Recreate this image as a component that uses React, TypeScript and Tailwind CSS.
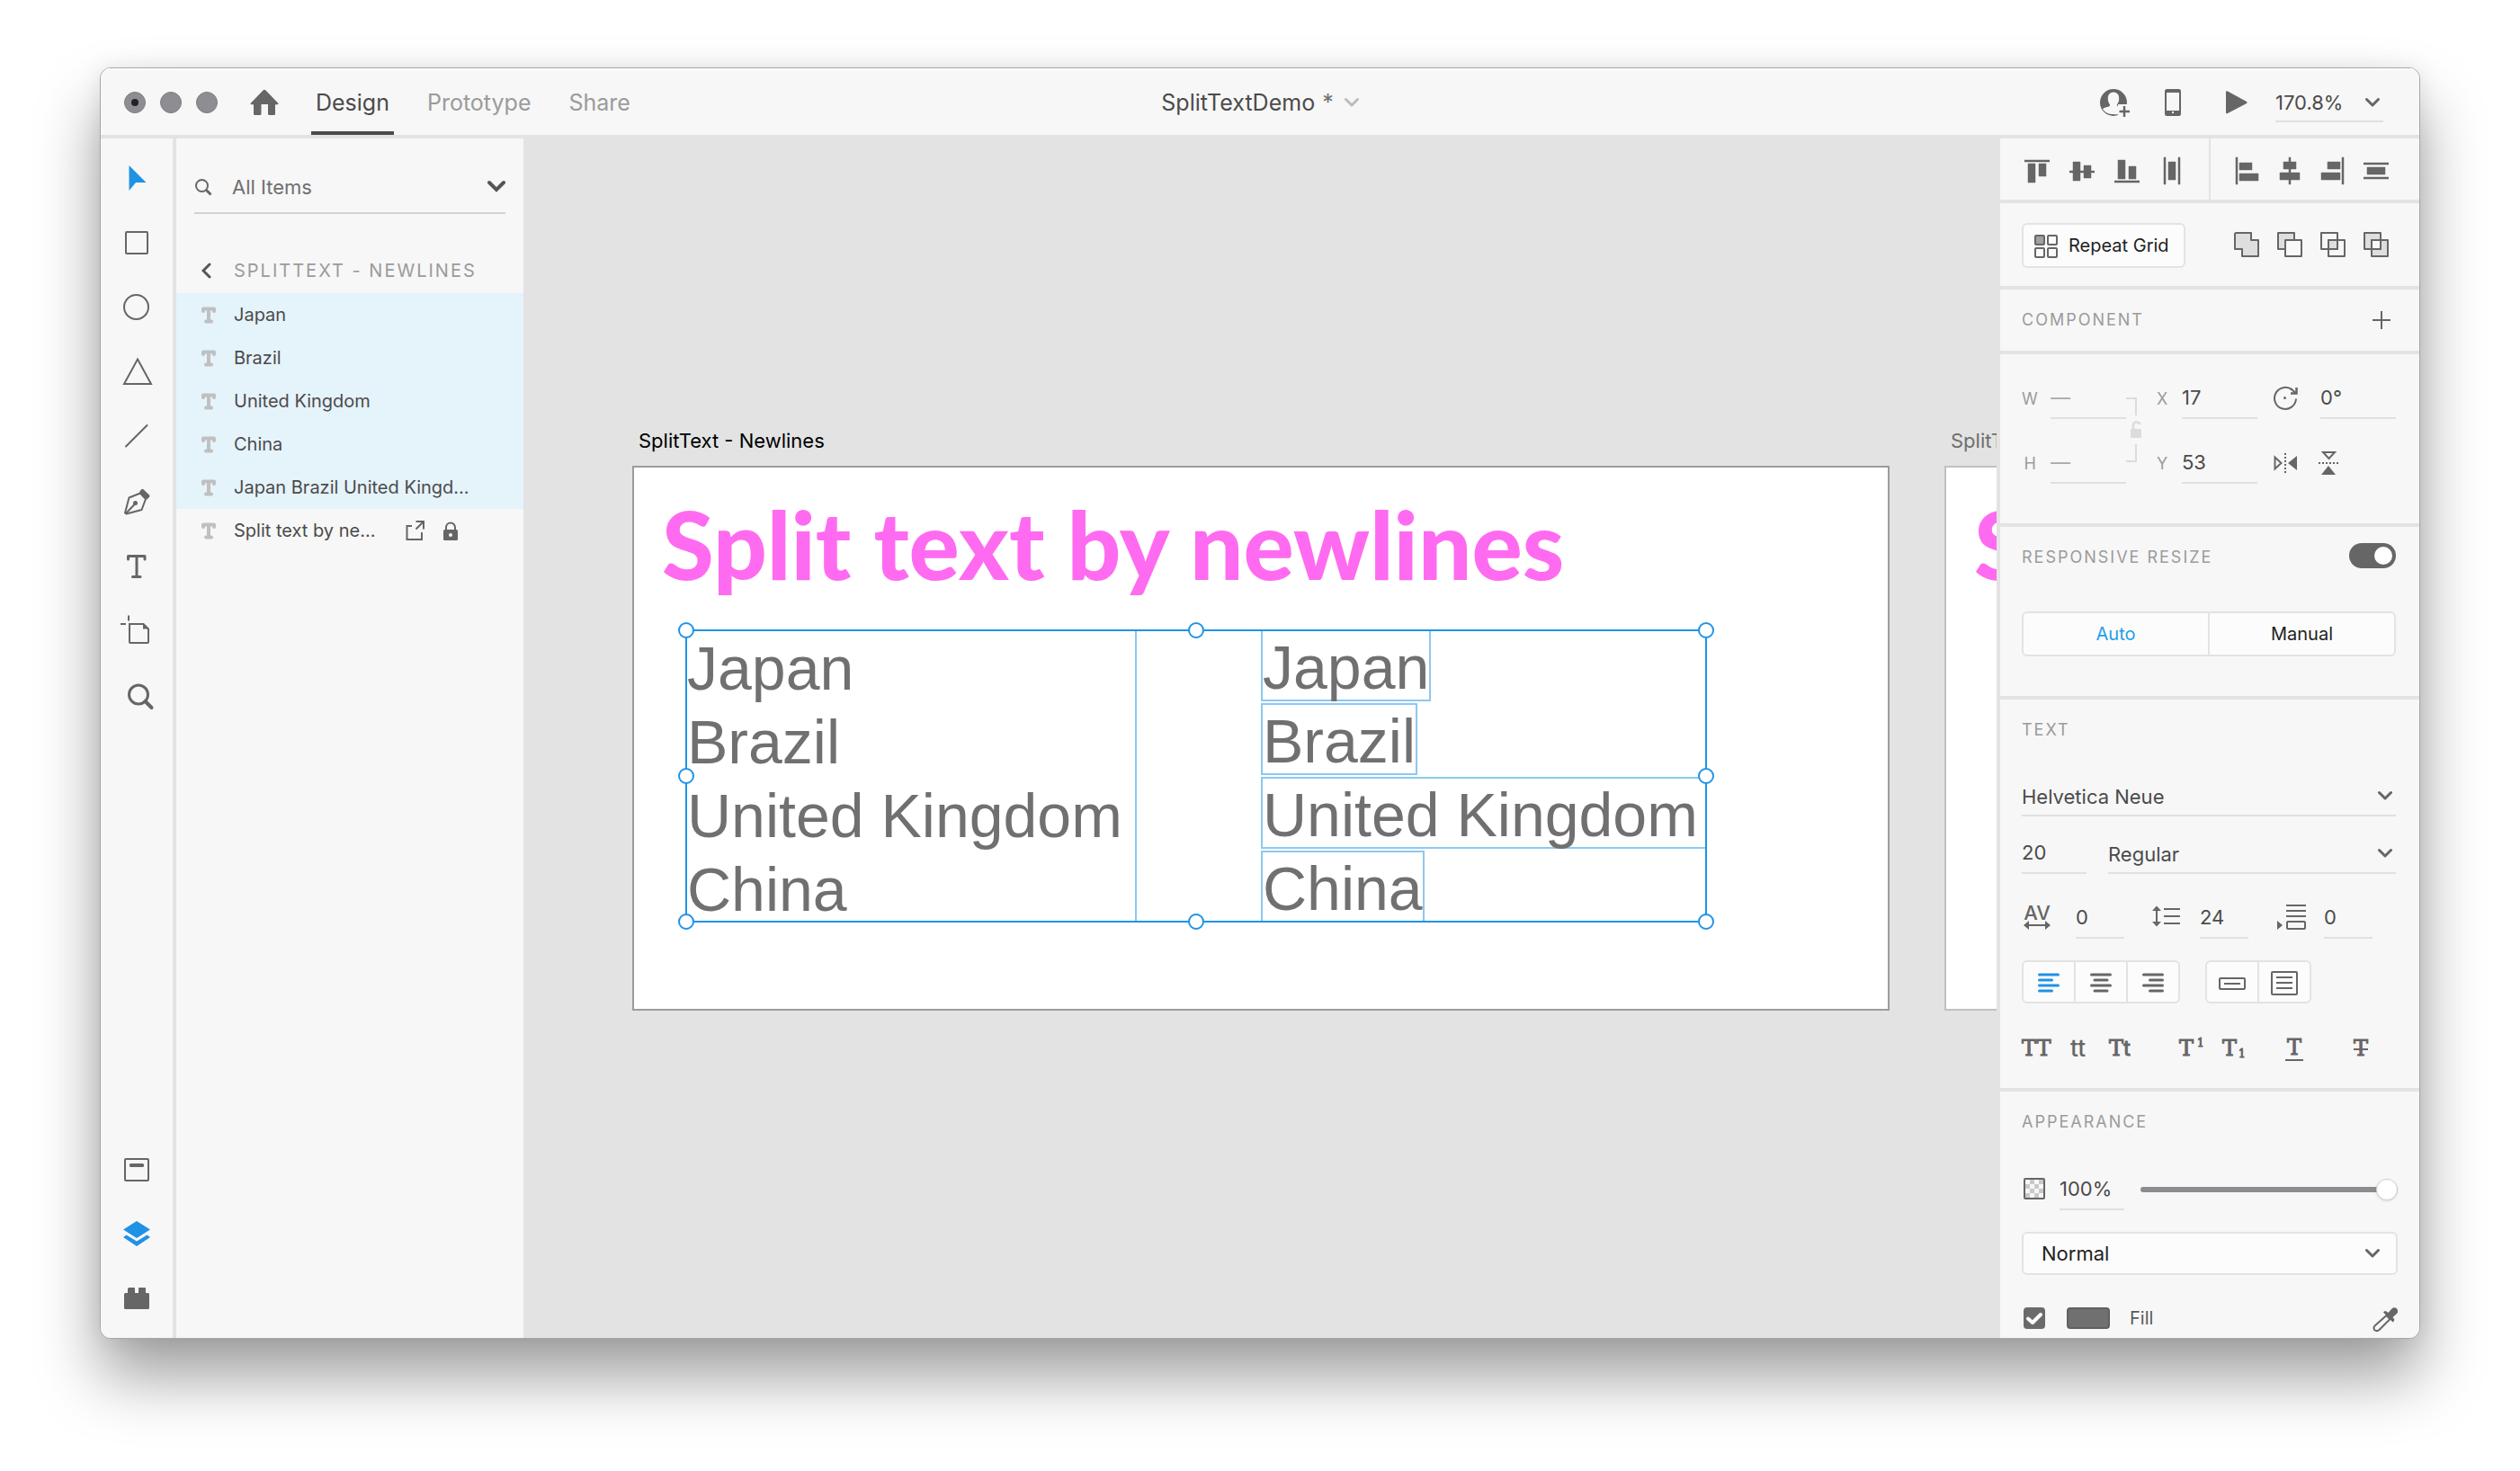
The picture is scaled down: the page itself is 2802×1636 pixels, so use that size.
import { useState, type ReactNode } from "react";

const INK = "#666666";

type IconProps = { w: number; h: number; children: ReactNode; className?: string };

function Icon({ w, h, children, className }: IconProps) {
  return (
    <svg
      width={w}
      height={h}
      viewBox={`0 0 ${w} ${h}`}
      fill="none"
      stroke="none"
      aria-hidden="true"
      className={className ?? "block shrink-0"}
    >
      {children}
    </svg>
  );
}

function Chevron({ color = INK, className }: { color?: string; className?: string }) {
  return (
    <Icon w={16} h={12} className={className}>
      <path d="M1.500 2.500 8 9l6.500-6.500" stroke={color} strokeWidth="3" strokeLinecap="round" strokeLinejoin="round" />
    </Icon>
  );
}

/* ---------- Header ---------- */

function Header() {
  const [mode, setMode] = useState("Design");
  return (
    <header className="grid h-[78px] shrink-0 grid-cols-[1fr_auto_1fr] border-b-4 border-[#e3e3e3] bg-[#f7f7f7] pt-[2px] shadow-[inset_0_2px_0_#ffffff]">
      <div className="flex items-center pl-[26px]">
        <div className="flex gap-4">
          {["Close", "Minimize", "Zoom"].map((name) => (
            <button
              key={name}
              aria-label={name}
              className="flex size-6 items-center justify-center rounded-full border border-[#7f7e83] bg-[#8e8d92]"
            >
              {name === "Close" && <span className="size-2 rounded-full bg-[#232325]" />}
            </button>
          ))}
        </div>
        <button aria-label="Home" className="ml-9">
          <Icon w={32} h={30}>
            <path
              d="M14.500 1.600a2 2 0 0 1 3 0L31 15.500q1.200 1.500-.8 1.700H28V27.500q0 1.500-1.500 1.500H21.500q-1.500 0-1.500-1.500V17H12.500V27.500q0 1.500-1.500 1.500H5.500Q4 29 4 27.500V17.200H1.800Q-.2 17 1 15.500Z"
              fill={INK}
            />
          </Icon>
        </button>
        <nav className="ml-9 flex h-full gap-8">
          {["Design", "Prototype", "Share"].map((name) => (
            <button
              key={name}
              onClick={() => setMode(name)}
              className={
                mode === name
                  ? "border-y-4 border-b-[#4b4b4b] border-t-transparent px-[5px] text-[25px] leading-8 text-[#4b4b4b]"
                  : "border-y-4 border-transparent px-[5px] text-[25px] leading-8 text-[#9b9b9b]"
              }
            >
              {name}
            </button>
          ))}
        </nav>
      </div>
      <button className="flex items-center text-[25px] leading-8 text-[#4b4b4b]">
        SplitTextDemo<span className="ml-2 text-[#707070]">*</span>
        <Chevron color="#bcbcbc" className="ml-3 block" />
      </button>
      <div className="flex items-center justify-end pr-10">
        <button aria-label="Invite" className="mr-[38px]">
          <Icon w={34} h={32}>
            <circle cx="15" cy="16" r="15" fill={INK} />
            <path
              d="M15 4.500c4 0 6.200 3 6.200 7 0 3.200-1 5.200-2.400 7 0 1.800 1.200 2.200 3.200 2.700 3 .8 4.500 2 5.500 4.300A14 14 0 0 1 15 29 14 14 0 0 1 3 23.500c1-1.300 2.300-1.800 4.800-2.400 2-.5 3.300-1 3.300-2.700-1.400-1.700-2.300-3.800-2.300-6.900 0-4 2.200-7 6.200-7Z"
              fill="#f7f7f7"
            />
            <rect x="20" y="18" width="14" height="14" fill="#f7f7f7" />
            <path d="M27 20v12M21.500 26H33" stroke={INK} strokeWidth="2.500" />
          </Icon>
        </button>
        <button aria-label="Device preview" className="mr-[49px]">
          <Icon w={18} h={32}>
            <rect x="1" y="2" width="16" height="28" rx="1.500" stroke={INK} strokeWidth="2" />
            <path d="M1 2h16v3H1ZM1 25h16v5H1Z" fill={INK} />
            <rect x="8" y="26" width="2" height="2" fill="#f7f7f7" />
          </Icon>
        </button>
        <button aria-label="Play" className="mr-[30px]">
          <Icon w={26} h={28}>
            <path d="M1 2.500Q1 .5 3 1.500L24 13q1.500 1 0 2L3 26Q1 27 1 25Z" fill={INK} />
          </Icon>
        </button>
        <div className="relative mt-2 w-[120px]">
          <select
            aria-label="Zoom level"
            className="block w-full appearance-none border-b-2 border-[#e0e0e0] bg-transparent pb-[6px] text-[22px] leading-7 text-[#4b4b4b]"
          >
            <option>170.8%</option>
          </select>
          <Chevron className="pointer-events-none absolute right-1 top-2" />
        </div>
      </div>
    </header>
  );
}

/* ---------- Toolbar ---------- */

const tools: { name: string; art: ReactNode }[] = [
  { name: "Select", art: <path d="M15.500 10 34.500 29H23l-7.500 9Z" fill="#2092e4" /> },
  { name: "Rectangle", art: <rect x="12" y="12" width="24" height="24" rx="1" stroke={INK} strokeWidth="2" /> },
  { name: "Ellipse", art: <circle cx="23.500" cy="23.500" r="13.500" stroke={INK} strokeWidth="2" /> },
  { name: "Polygon", art: <path d="M25 9.500 40 37H10Z" stroke={INK} strokeWidth="2" /> },
  { name: "Line", art: <path d="M12 34.500 35.500 11" stroke={INK} strokeWidth="2" strokeLinecap="round" /> },
  {
    name: "Pen",
    art: (
      <>
        <path d="m28 14.500-12.500 5L11 36.500l1.500 1 17-4.500 4.500-12Z" stroke={INK} strokeWidth="2" strokeLinejoin="round" />
        <path d="M12 37 22 26.500" stroke={INK} strokeWidth="2" />
        <circle cx="22.500" cy="25.500" r="2.500" fill={INK} />
        <path d="m27 13 2.500-3q1-.5 2 .3l6.500 6.200q.8 1 .2 2L35.500 21.500Z" fill={INK} />
      </>
    ),
  },
  {
    name: "Text",
    art: (
      <path
        d="M14.500 16V12.500h18.500V16M24 12.500v23M19.500 35.500h8.500"
        stroke={INK}
        strokeWidth="3"
        strokeLinecap="round"
        strokeLinejoin="round"
      />
    ),
  },
  {
    name: "Artboard",
    art: (
      <>
        <path d="M6 16h6M15 6.500v6" stroke={INK} strokeWidth="2" />
        <path d="M16 16h15.500l5.500 5.500V36q0 1-1 1H17q-1 0-1-1Z" stroke={INK} strokeWidth="2" />
        <path d="M31 16v5.500h6.500Z" fill={INK} />
      </>
    ),
  },
  {
    name: "Zoom",
    art: (
      <>
        <circle cx="26" cy="22.500" r="10.500" stroke={INK} strokeWidth="3" />
        <path d="m33.500 30 7 7" stroke={INK} strokeWidth="4" strokeLinecap="round" />
      </>
    ),
  },
];

const panels: { name: string; art: ReactNode }[] = [
  {
    name: "Libraries",
    art: (
      <>
        <rect x="11" y="13" width="26" height="24" rx="1" stroke={INK} strokeWidth="2" />
        <rect x="16" y="18" width="16" height="4" rx="1.500" fill={INK} />
      </>
    ),
  },
  {
    name: "Layers",
    art: (
      <path
        d="M24 10 39 19.500 24 29 9 19.500ZM12.500 25.500 24 32.500 35.500 25.500 39 28 24 38 9 28Z"
        fill="#2092e4"
      />
    ),
  },
  {
    name: "Plugins",
    art: (
      <path
        d="M15.500 12h5.500q1 0 1 1v5h4v-5q0-1 1-1h6q1 0 1 1v5h2.500Q38 18 38 19.500v15Q38 36 36.500 36h-25Q10 36 10 34.500v-15Q10 18 11.500 18H14v-4.500Q14 12 15.500 12Z"
        fill={INK}
      />
    ),
  },
];

function Toolbar() {
  const render = (item: { name: string; art: ReactNode }) => (
    <button key={item.name} aria-label={item.name} className="flex h-[72px] items-center justify-center">
      <Icon w={48} h={48}>
        {item.art}
      </Icon>
    </button>
  );
  return (
    <aside className="flex w-[84px] shrink-0 flex-col justify-between border-r-4 border-[#e3e3e3] bg-[#f7f7f7] py-2">
      <div className="flex flex-col">{tools.map(render)}</div>
      <div className="flex flex-col">{panels.map(render)}</div>
    </aside>
  );
}

/* ---------- Layers panel ---------- */

const layers = [
  { name: "Japan", selected: true },
  { name: "Brazil", selected: true },
  { name: "United Kingdom", selected: true },
  { name: "China", selected: true },
  { name: "Japan Brazil United Kingd...", selected: true },
  { name: "Split text by ne...", selected: false },
];

function LayersPanel() {
  return (
    <aside className="w-[386px] shrink-0 bg-[#f7f7f7] pt-[38px]">
      <div className="mx-5 flex items-center border-b-2 border-[#d3d3d3] pb-3">
        <Icon w={20} h={20}>
          <circle cx="8.500" cy="8.500" r="6.500" stroke={INK} strokeWidth="2" />
          <path d="m13.500 13.500 5 5" stroke={INK} strokeWidth="3" />
        </Icon>
        <input
          aria-label="Search layers"
          placeholder="All Items"
          className="ml-[22px] w-0 flex-1 bg-transparent text-[22px] leading-8 text-[#707070] outline-none placeholder:text-[#707070]"
        />
        <button aria-label="Filter layers">
          <Icon w={20} h={16}>
            <path d="m2 3 8 8 8-8" stroke="#555555" strokeWidth="4" strokeLinecap="round" />
          </Icon>
        </button>
      </div>
      <div className="flex h-[88px] items-end gap-6 pb-[11px] pl-7">
        <button aria-label="Back" className="py-[5px]">
          <Icon w={12} h={18}>
            <path d="m9 2-7 7 7 7" stroke="#555555" strokeWidth="3" strokeLinecap="round" />
          </Icon>
        </button>
        <h2 className="whitespace-nowrap text-[20px] leading-7 tracking-widest text-[#9b9b9b]">SPLITTEXT - NEWLINES</h2>
      </div>
      <ul>
        {layers.map((layer) => (
          <li
            key={layer.name}
            className={layer.selected ? "flex h-12 items-center bg-[#e5f3fb] pl-7" : "flex h-12 items-center pl-7"}
          >
            <Icon w={16} h={20}>
              <path d="M2 6V3.500h12V6M8 3.500v14M5 17.500h6" stroke="#c0c0c0" strokeWidth="4" strokeLinejoin="round" strokeLinecap="round" />
            </Icon>
            <span className="ml-5 whitespace-nowrap text-[20px] leading-7 text-[#4b4b4b]">{layer.name}</span>
            {!layer.selected && (
              <span className="ml-[34px] flex gap-5">
                <button aria-label="Mark for export">
                  <Icon w={22} h={24}>
                    <path d="M7 7H1.500V22H18V14" stroke={INK} strokeWidth="2" />
                    <path d="M11.500 2H20v8.500M20 2l-8.500 8.500" stroke={INK} strokeWidth="2" />
                  </Icon>
                </button>
                <button aria-label="Unlock">
                  <Icon w={16} h={24}>
                    <path d="M3 12V8.500a5 5 0 0 1 10 0V12" stroke={INK} strokeWidth="2" />
                    <rect y="11" width="16" height="12" rx="1.500" fill={INK} />
                    <circle cx="8" cy="17" r="2" fill="#f7f7f7" />
                  </Icon>
                </button>
              </span>
            )}
          </li>
        ))}
      </ul>
    </aside>
  );
}

/* ---------- Canvas ---------- */

const countries = ["Japan", "Brazil", "United Kingdom", "China"];

const handles = [
  "-left-[10px] -top-[10px]",
  "left-1/2 -translate-x-1/2 -top-[10px]",
  "-right-[10px] -top-[10px]",
  "-left-[10px] top-1/2 -translate-y-1/2",
  "-right-[10px] top-1/2 -translate-y-1/2",
  "-left-[10px] -bottom-[10px]",
  "left-1/2 -translate-x-1/2 -bottom-[10px]",
  "-right-[10px] -bottom-[10px]",
];

const artboardTitle =
  "absolute left-[31px] top-[24px] whitespace-nowrap font-['Lato'] text-[105px] font-black leading-[120px] text-[#ff6bf0]";

function Canvas() {
  return (
    <main className="relative min-w-0 flex-1 overflow-hidden bg-[#e3e3e3]">
      <div className="absolute left-[121px] top-[322px] w-[1398px]">
        <div className="pl-[7px] text-[22px] leading-7 text-black">SplitText - Newlines</div>
        <section className="relative mt-[14px] h-[606px] border-2 border-[#9c9c9c] bg-white">
          <h1 className={artboardTitle}>Split text by newlines</h1>
          <div className="absolute left-[57px] top-[180px] h-[326px] w-[1136px] border-2 border-[#1f93e8] font-['Liberation_Sans'] text-[68px] text-[#707070]">
            <div className="absolute inset-y-0 left-0 w-[500px] border-r-2 border-[#8cc8f2] leading-[82px]">
              {countries.map((name) => (
                <div key={name}>{name}</div>
              ))}
            </div>
            <div className="absolute -right-[2px] -top-[2px] flex w-[496px] flex-col items-start gap-[2px]">
              {countries.map((name) => (
                <div
                  key={name}
                  className={`h-20 whitespace-nowrap border-2 border-[#8cc8f2] leading-[80px] ${
                    name === "United Kingdom" ? "self-stretch" : ""
                  }`}
                >
                  {name}
                </div>
              ))}
            </div>
            <div className="absolute -inset-[2px] border-2 border-[#1f93e8]" />
            {handles.map((place) => (
              <span key={place} className={`absolute size-[18px] rounded-full border-2 border-[#1f93e8] bg-white ${place}`} />
            ))}
          </div>
        </section>
      </div>
      <div className="absolute left-[1580px] right-0 top-[322px] overflow-hidden">
        <div className="whitespace-nowrap pl-[7px] text-[22px] leading-7 text-[#6e6e6e]">SplitText</div>
        <section className="relative mt-[14px] h-[606px] overflow-hidden border-2 border-r-0 border-[#c0c0c0] bg-white">
          <h1 className={artboardTitle}>S</h1>
        </section>
      </div>
    </main>
  );
}

/* ---------- Inspector ---------- */

const alignLeft: { name: string; art: ReactNode }[] = [
  { name: "Align top", art: <path d="M0 8h28v2H0ZM4 12h8v21H4ZM16 12h8v14h-8Z" /> },
  { name: "Align middle", art: <path d="M0 20h28v2H0ZM4 10h8v21H4ZM16 14h8v14h-8Z" /> },
  { name: "Align bottom", art: <path d="M0 31h28v2H0ZM4 8h8v21H4ZM16 15h8v14h-8Z" /> },
  { name: "Distribute horizontally", art: <path d="M5 5h2v30H5ZM21 5h2v30h-2ZM10 10h8v20h-8Z" /> },
];

const alignRight: { name: string; art: ReactNode }[] = [
  { name: "Align left", art: <path d="M2 5h2v30H2ZM6 11h14v8H6ZM6 23h21v8H6Z" /> },
  { name: "Align center", art: <path d="M13 5h2v30h-2ZM7 10h14v8H7ZM3 22h22v8H3Z" /> },
  { name: "Align right", art: <path d="M24 5h2v30h-2ZM8 10h14v8H8ZM1 22h21v8H1Z" /> },
  { name: "Distribute vertically", art: <path d="M0 11h28v2H0ZM0 27h28v2H0ZM4 16h20v8H4Z" /> },
];

const booleans: { name: string; art: ReactNode }[] = [
  {
    name: "Add",
    art: <path d="M2 1h17v8h8v18H9v-8H1V2Z" fill="#dedede" stroke={INK} strokeWidth="2" strokeLinejoin="round" />,
  },
  {
    name: "Subtract",
    art: (
      <g stroke={INK} strokeWidth="2" strokeLinejoin="round">
        <path d="M1 1h18v18H1Z" fill="#dedede" />
        <path d="M9 9h18v18H9Z" fill="#f9f9f9" />
      </g>
    ),
  },
  {
    name: "Intersect",
    art: (
      <g stroke={INK} strokeWidth="2" strokeLinejoin="round">
        <path d="M1 1h18v18H1ZM9 9h18v18H9Z" />
        <path d="M9 9h10v10H9Z" fill="#dedede" />
      </g>
    ),
  },
  {
    name: "Exclude overlap",
    art: (
      <g stroke={INK} strokeWidth="2" strokeLinejoin="round">
        <path d="M1 1h18v18H1ZM9 9h18v18H9Z" fill="#dedede" />
        <path d="M9 9h10v10H9Z" fill="#f9f9f9" />
      </g>
    ),
  },
];

function AlignButton({ item }: { item: { name: string; art: ReactNode } }) {
  return (
    <button aria-label={item.name}>
      <Icon w={28} h={36}>
        <g fill={INK} stroke={INK} strokeWidth="0.500" strokeLinejoin="round">
          {item.art}
        </g>
      </Icon>
    </button>
  );
}

function Field({ label, value, className }: { label: string; value: string; className: string }) {
  return (
    <input
      aria-label={label}
      defaultValue={value}
      className={`block border-b-2 border-[#e0e0e0] bg-transparent pb-2 text-[22px] leading-7 text-[#4b4b4b] outline-none ${className}`}
    />
  );
}

function LabeledField({ id, label, value, dash }: { id: string; label: string; value: string; dash?: boolean }) {
  return (
    <div className="flex items-baseline justify-between">
      <label
        htmlFor={id}
        className={dash ? "w-4 text-right text-[18px] leading-6 text-[#9b9b9b]" : "w-3 text-[18px] leading-6 text-[#9b9b9b]"}
      >
        {label}
      </label>
      <input
        id={id}
        defaultValue={value}
        className={`block h-[38px] w-[84px] border-b-2 border-[#e0e0e0] bg-transparent pb-2 text-[22px] leading-7 outline-none ${
          dash ? "text-[#a8a8a8]" : "text-[#4b4b4b]"
        }`}
      />
    </div>
  );
}

function LineSelect({ label, value }: { label: string; value: string }) {
  return (
    <div className="relative flex-1">
      <select
        aria-label={label}
        className="block w-full appearance-none border-b-2 border-[#e0e0e0] bg-transparent pb-[6px] text-[22px] leading-7 text-[#4b4b4b]"
      >
        <option>{value}</option>
      </select>
      <Chevron className="pointer-events-none absolute right-1 top-[7px]" />
    </div>
  );
}

function SectionTitle({ children }: { children: ReactNode }) {
  return <h2 className="text-[18px] leading-6 tracking-[2px] text-[#9b9b9b]">{children}</h2>;
}

const slab = "font-['DejaVu_Serif'] text-[24px] leading-7 [-webkit-text-stroke:1px_#666666]";

function Inspector() {
  return (
    <aside className="flex w-[470px] shrink-0 flex-col overflow-hidden border-l-4 border-[#e3e3e3] bg-[#f7f7f7] [&>section]:shrink-0">
      <section className="flex h-[72px] items-center border-b-4 border-[#e3e3e3]">
        <div className="flex h-full w-[234px] items-center gap-[22px] border-r-2 border-[#e3e3e3] pl-[27px]">
          {alignLeft.map((item) => (
            <AlignButton key={item.name} item={item} />
          ))}
        </div>
        <div className="flex items-center gap-5 pl-[26px]">
          {alignRight.map((item) => (
            <AlignButton key={item.name} item={item} />
          ))}
        </div>
      </section>

      <section className="flex h-24 items-center justify-between border-b-4 border-[#e3e3e3] pl-6 pr-[34px]">
        <button className="mt-[2px] flex h-[50px] w-[182px] items-center gap-3 rounded-md border-2 border-[#e3e3e3] bg-[#fcfcfc] pl-3 text-[20px] text-[#222222]">
          <Icon w={26} h={28} className="mt-1 block shrink-0">
            <g stroke={INK} strokeWidth="2">
              <rect x="1" y="1" width="10" height="10" rx="1" fill="#a0a0a0" />
              <rect x="15" y="1" width="10" height="10" rx="1" />
              <rect x="1" y="15" width="10" height="10" rx="1" />
              <rect x="15" y="15" width="10" height="10" rx="1" />
            </g>
          </Icon>
          <span className="whitespace-nowrap">Repeat Grid</span>
        </button>
        <div className="flex gap-5">
          {booleans.map((item) => (
            <button key={item.name} aria-label={item.name}>
              <Icon w={28} h={28}>
                {item.art}
              </Icon>
            </button>
          ))}
        </div>
      </section>

      <section className="flex h-[72px] items-center justify-between border-b-4 border-[#e3e3e3] pl-6 pr-8">
        <SectionTitle>COMPONENT</SectionTitle>
        <button aria-label="Make component">
          <Icon w={20} h={20}>
            <path d="M10 0v20M0 10h20" stroke={INK} strokeWidth="2" />
          </Icon>
        </button>
      </section>

      <section className="grid h-[192px] grid-cols-[116px_34px_112px_1fr] content-start gap-y-[34px] border-b-4 border-[#e3e3e3] pl-6 pr-[26px] pt-[34px]">
        <LabeledField id="w" label="W" value="—" dash />
        <button aria-label="Lock aspect ratio" className="row-span-2">
          <Icon w={34} h={110}>
            <path d="M0 15h11v19M11 66v19H0" stroke="#dcdcdc" strokeWidth="2" />
            <path d="M8 50v-5q0-3.500 4-3.500 2.500 0 3.500 2.500" stroke="#dcdcdc" strokeWidth="2.500" />
            <rect x="5" y="49" width="12" height="10" rx="1" fill="#dcdcdc" />
          </Icon>
        </button>
        <LabeledField id="x" label="X" value="17" />
        <div className="flex items-start pl-[18px]">
          <button aria-label="Rotation">
            <Icon w={28} h={30}>
              <path d="M20.500 5.500A12 12 0 1 0 25 15.500" stroke={INK} strokeWidth="2" />
              <path d="M25.500 3v6.500H19" stroke={INK} strokeWidth="2.500" />
              <path d="m19 4 5.500 5" stroke={INK} strokeWidth="2" />
              <circle cx="12.500" cy="14.500" r="1.500" fill={INK} />
            </Icon>
          </button>
          <Field label="Rotation angle" value="0°" className="ml-6 w-[84px]" />
        </div>
        <LabeledField id="h" label="H" value="—" dash />
        <LabeledField id="y" label="Y" value="53" />
        <div className="flex items-start gap-[22px] pl-[18px]">
          <button aria-label="Flip horizontally">
            <Icon w={28} h={30}>
              <path d="M1.500 8.500v13L8.500 15Z" stroke={INK} strokeWidth="2" />
              <path d="M26 7v16L16 15Z" fill={INK} />
              <path d="M13 4v22" stroke={INK} strokeWidth="2" strokeDasharray="2 2" />
            </Icon>
          </button>
          <button aria-label="Flip vertically">
            <Icon w={24} h={30}>
              <path d="M5 3h13l-6.500 7Z" stroke={INK} strokeWidth="2" />
              <path d="M3 28h16l-8-10Z" fill={INK} />
              <path d="M0 15h22" stroke={INK} strokeWidth="2" strokeDasharray="2 2" />
            </Icon>
          </button>
        </div>
      </section>

      <section className="h-[192px] border-b-4 border-[#e3e3e3] pl-6 pr-[26px] pt-[18px]">
        <div className="flex h-7 items-end justify-between">
          <SectionTitle>RESPONSIVE RESIZE</SectionTitle>
          <label className="relative block h-7 w-[52px]">
            <input
              type="checkbox"
              role="switch"
              aria-label="Responsive resize"
              defaultChecked
              className="peer block h-7 w-[52px] appearance-none rounded-full bg-[#b5b5b5] checked:bg-[#666666]"
            />
            <span className="pointer-events-none absolute left-1 top-1 size-5 rounded-full bg-white peer-checked:left-7" />
          </label>
        </div>
        <div className="mt-12 flex h-[50px] rounded-md border-2 border-[#e3e3e3] bg-[#fcfcfc] text-[20px]">
          <button className="flex-1 border-r-2 border-[#e3e3e3] text-[#1f9ee8]">Auto</button>
          <button className="flex-1 text-[#222222]">Manual</button>
        </div>
      </section>

      <section className="border-b-4 border-[#e3e3e3] pb-[30px] pl-6 pr-[26px] pt-[22px]">
        <SectionTitle>TEXT</SectionTitle>
        <div className="mt-12 flex">
          <LineSelect label="Font family" value="Helvetica Neue" />
        </div>
        <div className="mt-[26px] flex items-end gap-6">
          <Field label="Font size" value="20" className="w-[72px]" />
          <LineSelect label="Font weight" value="Regular" />
        </div>
        <div className="mt-[34px] flex gap-[30px] pl-[2px]">
          <div className="flex justify-between gap-7">
            <span className="flex w-[30px] flex-col items-center">
              <span className="text-[22px] font-medium leading-[18px] text-[#666666]">AV</span>
              <Icon w={30} h={10}>
                <path d="M4 5h22" stroke={INK} strokeWidth="2" />
                <path d="M0 5 6 0v10ZM30 5l-6-5v10Z" fill={INK} />
              </Icon>
            </span>
            <Field label="Character spacing" value="0" className="w-[54px]" />
          </div>
          <div className="flex justify-between gap-[22px]">
            <Icon w={32} h={30}>
              <path d="M6 4v18M14 5h18M14 13h18M14 21h18" stroke={INK} strokeWidth="2" />
              <path d="M6 1.500 11 7H1ZM6 24.500 11 19H1Z" fill={INK} />
            </Icon>
            <Field label="Line spacing" value="24" className="w-[54px]" />
          </div>
          <div className="flex justify-between gap-5">
            <Icon w={34} h={30}>
              <path d="M12 1h22M12 7h22M12 13h22" stroke={INK} strokeWidth="2" />
              <rect x="13" y="19" width="20" height="8" rx="1" stroke={INK} strokeWidth="2" />
              <path d="M2 18v10l6-5Z" fill={INK} />
            </Icon>
            <Field label="Paragraph spacing" value="0" className="w-[54px]" />
          </div>
        </div>
        <div className="mt-6 flex gap-7">
          <div className="flex h-12 divide-x-2 divide-[#e3e3e3] rounded-md border-2 border-[#e3e3e3] bg-[#fcfcfc]">
            <button aria-label="Left align" className="flex w-[58px] items-center justify-center">
              <Icon w={24} h={24}>
                <path d="M1.500 4h21M1.500 10h14M1.500 16h21M1.500 22h14" stroke="#2092e4" strokeWidth="3" strokeLinecap="round" />
              </Icon>
            </button>
            <button aria-label="Center align" className="flex w-[58px] items-center justify-center">
              <Icon w={24} h={24}>
                <path d="M1.500 4h21M5 10h14M1.500 16h21M5 22h14" stroke={INK} strokeWidth="3" strokeLinecap="round" />
              </Icon>
            </button>
            <button aria-label="Right align" className="flex w-14 items-center justify-center">
              <Icon w={24} h={24}>
                <path d="M1.500 4h21M8.500 10h14M1.500 16h21M8.500 22h14" stroke={INK} strokeWidth="3" strokeLinecap="round" />
              </Icon>
            </button>
          </div>
          <div className="flex h-12 divide-x-2 divide-[#e3e3e3] rounded-md border-2 border-[#e3e3e3] bg-[#fcfcfc]">
            <button aria-label="Point text" className="flex w-[58px] items-center justify-center">
              <Icon w={30} h={30}>
                <rect x="1" y="11" width="28" height="12" rx="1" stroke={INK} strokeWidth="2" />
                <path d="M6 17h18" stroke={INK} strokeWidth="2" />
              </Icon>
            </button>
            <button aria-label="Area text" className="flex w-14 items-center justify-center">
              <Icon w={30} h={30}>
                <rect x="1" y="4" width="28" height="25" rx="1" stroke={INK} strokeWidth="2" />
                <path d="M6 10h18M6 16h18M6 22h18" stroke={INK} strokeWidth="2" />
              </Icon>
            </button>
          </div>
        </div>
        <div className="mt-9 flex h-7 text-[#666666]">
          <button aria-label="Uppercase" className={`w-[54px] text-left ${slab}`}>
            TT
          </button>
          <button aria-label="Lowercase" className="w-[43px] text-left text-[26px] font-medium leading-7">
            tt
          </button>
          <button aria-label="Title case" className={`w-[78px] text-left ${slab}`}>
            T<span className="font-['Inter']">t</span>
          </button>
          <button aria-label="Superscript" className={`flex w-12 ${slab}`}>
            T<span className="ml-1 text-[12px] leading-4">1</span>
          </button>
          <button aria-label="Subscript" className={`flex w-[70px] items-end ${slab}`}>
            T<span className="ml-[2px] text-[12px] leading-4">1</span>
          </button>
          <button aria-label="Underline" className={`w-5 border-b-2 border-[#666666] text-center leading-[26px] ${slab}`}>
            T
          </button>
          <button aria-label="Strikethrough" className={`ml-[54px] w-5 text-center line-through decoration-2 ${slab}`}>
            T
          </button>
        </div>
      </section>

      <section className="pb-6 pl-6 pr-6 pt-[22px]">
        <SectionTitle>APPEARANCE</SectionTitle>
        <div className="mt-12 flex">
          <Icon w={28} h={28}>
            <path
              d="M9 4h5v5H9ZM19 4h5v5h-5ZM4 9h5v5H4ZM14 9h5v5h-5ZM9 14h5v5H9ZM19 14h5v5h-5ZM4 19h5v5H4ZM14 19h5v5h-5Z"
              fill="#c9c9c9"
            />
            <rect x="3" y="3" width="22" height="22" rx="1" stroke={INK} strokeWidth="2" />
          </Icon>
          <Field label="Opacity" value="100%" className="ml-[14px] w-[72px]" />
          <input
            type="range"
            aria-label="Opacity slider"
            defaultValue={100}
            className="ml-[18px] mt-3 h-[6px] w-0 flex-1 appearance-none rounded-full bg-[#8c8b90] [&::-webkit-slider-thumb]:size-6 [&::-webkit-slider-thumb]:appearance-none [&::-webkit-slider-thumb]:rounded-full [&::-webkit-slider-thumb]:border [&::-webkit-slider-thumb]:border-[#d0d0d0] [&::-webkit-slider-thumb]:bg-white [&::-webkit-slider-thumb]:shadow-sm"
          />
        </div>
        <div className="relative mt-6">
          <select
            aria-label="Blend mode"
            className="block h-12 w-full appearance-none rounded-md border-2 border-[#e3e3e3] bg-[#fcfcfc] pl-5 text-[22px] text-[#222222]"
          >
            <option>Normal</option>
          </select>
          <Chevron className="pointer-events-none absolute right-5 top-[18px]" />
        </div>
        <div className="mt-9 flex h-6 items-center pl-[2px]">
          <span className="relative block size-6">
            <input
              id="fill"
              type="checkbox"
              defaultChecked
              className="block size-6 appearance-none rounded-sm border-2 border-[#6b6b6b] checked:bg-[#6b6b6b]"
            />
            <Icon w={24} h={24} className="pointer-events-none absolute left-0 top-0">
              <path d="m5 12.500 5 4.500 9-9" stroke="#ffffff" strokeWidth="4" strokeLinecap="round" strokeLinejoin="round" />
            </Icon>
          </span>
          <button aria-label="Fill color" className="ml-6 h-6 w-12 rounded border-2 border-[#606060] bg-[#707070]" />
          <label htmlFor="fill" className="ml-[22px] text-[20px] leading-6 text-[#5a5a5a]">
            Fill
          </label>
          <button aria-label="Pick color" className="ml-auto mt-1">
            <Icon w={28} h={28}>
              <path
                d="m15.500 9 4 4L7.500 25q-2.500 2-5 .5-2-2.500 0-5Z"
                stroke={INK}
                strokeWidth="2"
                strokeLinejoin="round"
              />
              <path
                d="M12 5.500q1.500-2.500 3.500-1l2 1.500 4-4.500q3-2.500 5.500 0 2.500 3 0 5.500L22.500 11l1.500 2q1 2-1.500 3.500Z"
                fill={INK}
              />
            </Icon>
          </button>
        </div>
      </section>
    </aside>
  );
}

export default function App() {
  return (
    <div className="flex h-screen bg-white px-[111px] pb-[147px] pt-[75px] font-['Inter',sans-serif]">
      <div className="flex min-w-0 flex-1 flex-col overflow-hidden rounded-xl border border-[#a6a6a6] bg-[#e3e3e3] shadow-[0_42px_70px_rgba(0,0,0,0.38),0_0_24px_rgba(0,0,0,0.08)]">
        <Header />
        <div className="flex min-h-0 flex-1">
          <Toolbar />
          <LayersPanel />
          <Canvas />
          <Inspector />
        </div>
      </div>
    </div>
  );
}
